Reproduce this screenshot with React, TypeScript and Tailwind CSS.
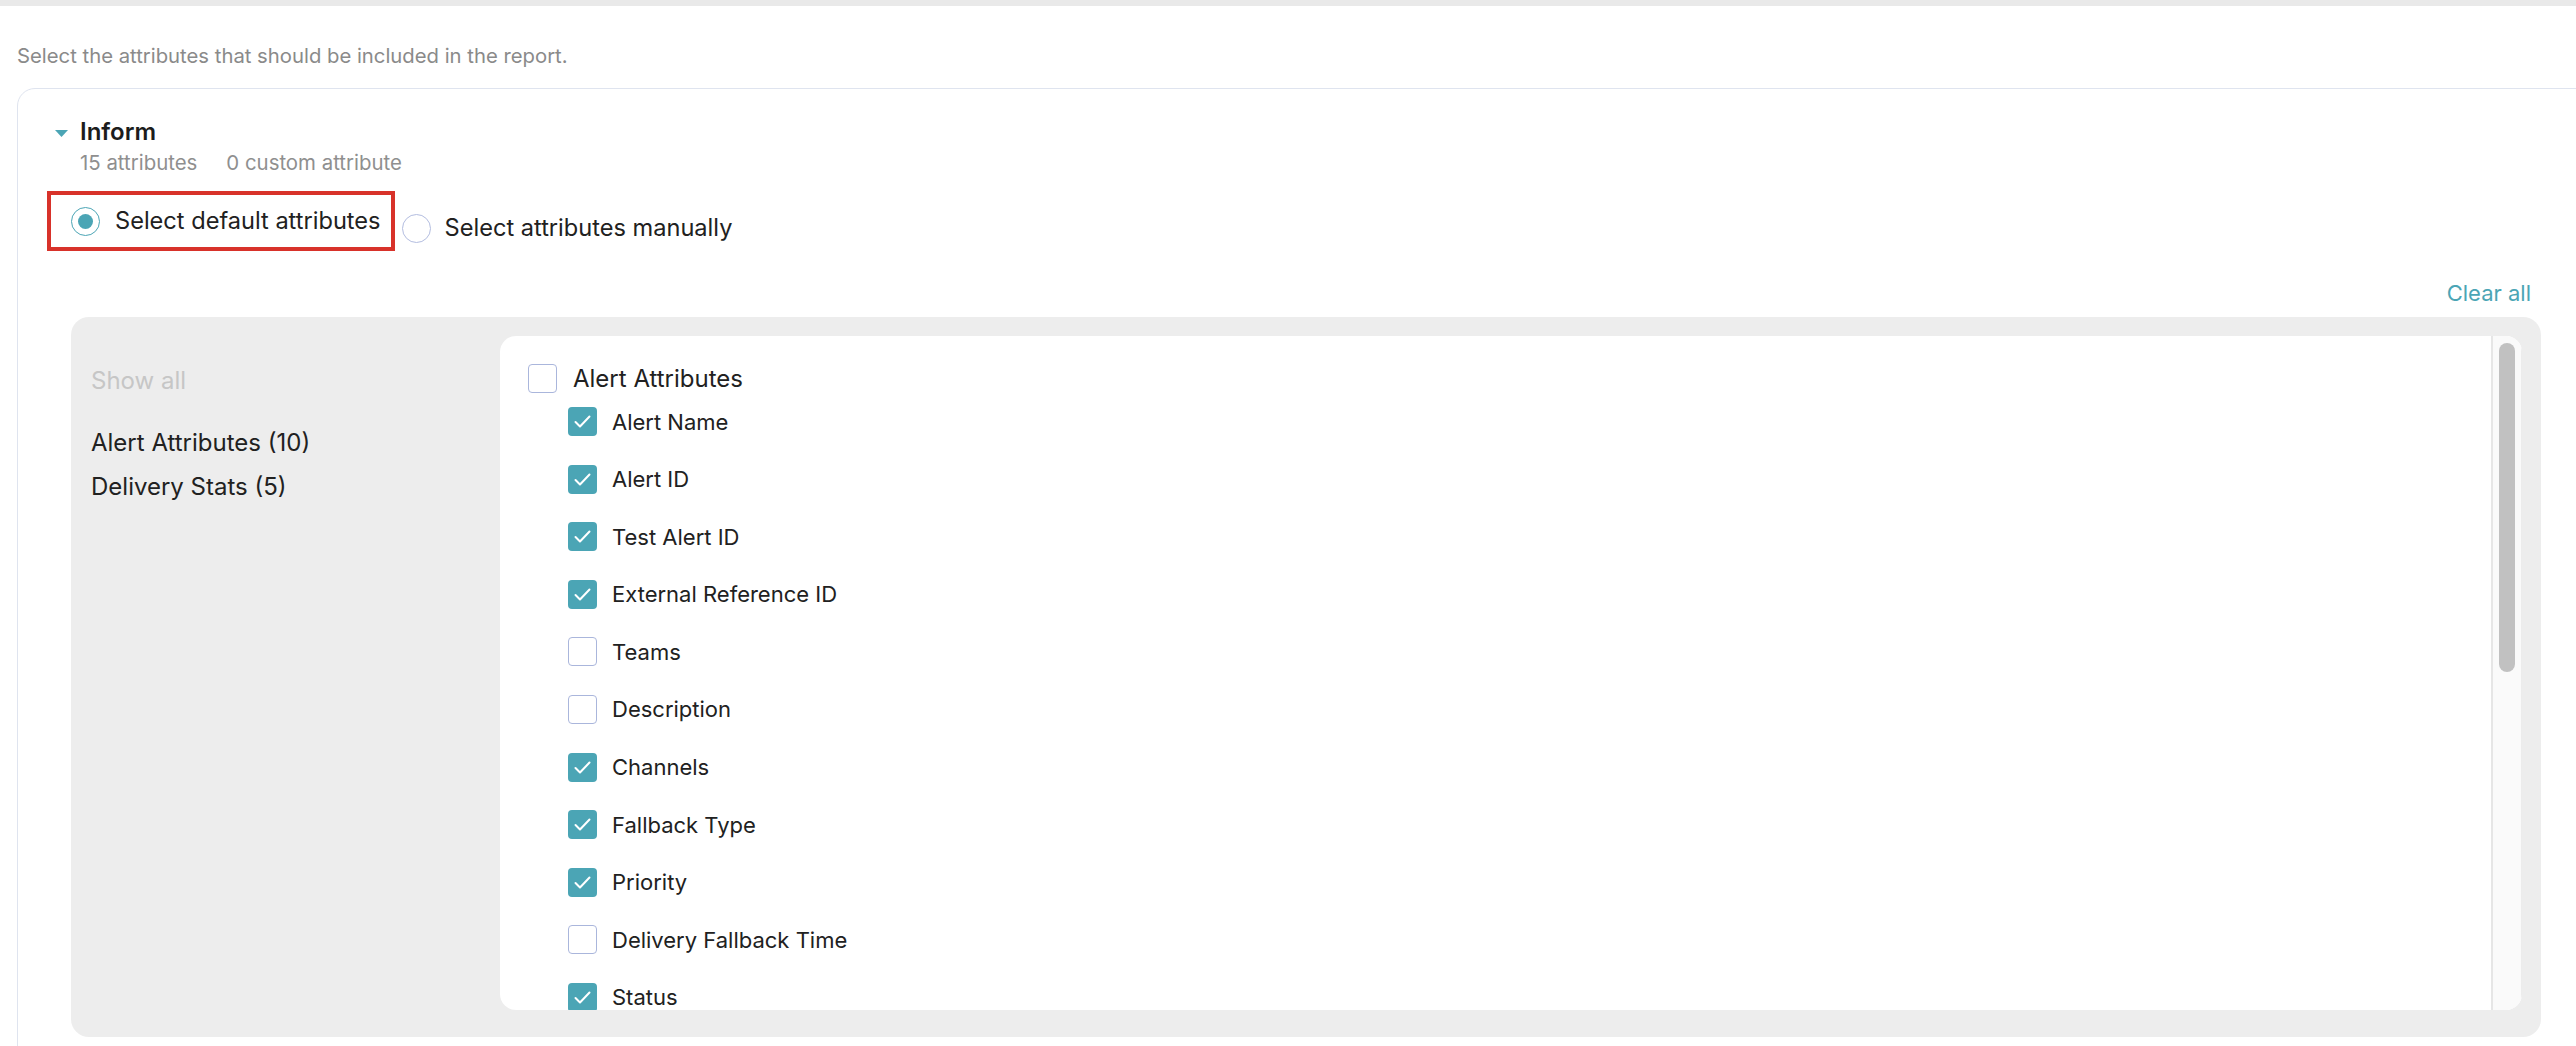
import React from "react";

const TEAL = "#4ba5b5";

function Check({ checked }: { checked: boolean }) {
  if (checked) {
    return (
      <span className="flex h-[29px] w-[29px] shrink-0 items-center justify-center rounded-[4px] bg-[#4ba5b5]">
        <svg width="29" height="29" viewBox="0 0 29 29" fill="none">
          <path d="M7.5 15 L12 19.5 L21.5 9.5" stroke="#ffffff" strokeWidth="2" strokeLinecap="round" strokeLinejoin="round" />
        </svg>
      </span>
    );
  }
  return <span className="block h-[29px] w-[29px] shrink-0 rounded-[4px] border border-[#aab6dc] bg-white" />;
}

const items: { label: string; checked: boolean }[] = [
  { label: "Alert Name", checked: true },
  { label: "Alert ID", checked: true },
  { label: "Test Alert ID", checked: true },
  { label: "External Reference ID", checked: true },
  { label: "Teams", checked: false },
  { label: "Description", checked: false },
  { label: "Channels", checked: true },
  { label: "Fallback Type", checked: true },
  { label: "Priority", checked: true },
  { label: "Delivery Fallback Time", checked: false },
  { label: "Status", checked: true },
];

export default function App() {
  return (
    <div className="h-[1046px] w-[2576px] overflow-hidden bg-white font-['Inter','Noto_Sans',sans-serif] text-[#212121]">
      <div className="h-[6px] bg-[#e9e9e9]" />
      <div className="mt-[38px] pl-[17px] text-[20.3px] leading-[24px] text-[#8a8a8a]">
        Select the attributes that should be included in the report.
      </div>

      <div className="ml-[17px] mt-[20px] w-[2579px] rounded-t-[18px] border border-[#dfe4ef] pb-[40px] pl-[37px] pr-[54px] pt-[27px]">
        {/* Title */}
        <div className="flex items-center">
          <svg width="13" height="7" viewBox="0 0 13 7" className="mt-[2px]">
            <path d="M0 0 H13 L6.5 7 Z" fill={TEAL} />
          </svg>
          <span className="ml-[12px] text-[24px] font-semibold leading-[32px] text-[#1c1c1c]">Inform</span>
        </div>
        <div className="ml-[25px] mt-[3px] flex gap-[29px] text-[20.4px] leading-[24px] text-[#8f8f8f]">
          <span>15 attributes</span>
          <span>0 custom attribute</span>
        </div>

        {/* Radios */}
        <div className="ml-[-8px] mt-[16px] flex items-start">
          <div className="flex h-[60px] items-center border-[4px] border-[#d8322a] pl-[20px] pr-[10px]">
            <span className="flex h-[29px] w-[29px] items-center justify-center rounded-full border border-[#4ba5b5]">
              <span className="h-[15px] w-[15px] rounded-full bg-[#4ba5b5]" />
            </span>
            <span className="ml-[15px] text-[23.6px] leading-[30px]">Select default attributes</span>
          </div>
          <div className="ml-[7px] mt-[22px] flex items-center">
            <span className="h-[29px] w-[29px] rounded-full border border-[#b3bde0]" />
            <span className="ml-[14px] text-[23.6px] leading-[30px]">Select attributes manually</span>
          </div>
        </div>

        {/* Clear all */}
        <div className="mr-[10px] mt-[28px] flex justify-end">
          <span className="text-[22px] leading-[28px] text-[#4ba5b5]">Clear all</span>
        </div>

        {/* Gray panel */}
        <div className="ml-[16px] mt-[10px] flex h-[720px] rounded-[18px] bg-[#ededed] pb-[27px] pr-[19px] pt-[19px]">
          <div className="w-[429px] shrink-0 pl-[20px] pt-[31px]">
            <div className="text-[24px] leading-[28px] text-[#c6c6c6]">Show all</div>
            <div className="mt-[34px] text-[24px] leading-[28px]">Alert Attributes (10)</div>
            <div className="mt-[16px] text-[24px] leading-[28px]">Delivery Stats (5)</div>
          </div>

          <div className="flex min-w-0 flex-1 overflow-hidden rounded-[16px] bg-white">
            <div className="min-w-0 flex-1 overflow-hidden pl-[28px] pt-[28px]">
              <div className="flex items-center">
                <Check checked={false} />
                <span className="ml-[16px] text-[24px] leading-[28px]">Alert Attributes</span>
              </div>
              <div className="ml-[40px] mt-[14px] flex flex-col gap-[28.6px]">
                {items.map((it) => (
                  <div key={it.label} className="flex h-[29px] items-center">
                    <Check checked={it.checked} />
                    <span className="ml-[15px] text-[22px] leading-[28px]">{it.label}</span>
                  </div>
                ))}
              </div>
            </div>
            {/* scrollbar track */}
            <div className="w-[31px] shrink-0 border-l-2 border-r border-l-[#e6e6e6] border-r-[#ececec] bg-[#fafafa] pl-[6px] pt-[7px]">
              <div className="h-[329px] w-[16px] rounded-full bg-[#c1c1c1]" />
            </div>
          </div>
        </div>
      </div>
    </div>
  );
}
